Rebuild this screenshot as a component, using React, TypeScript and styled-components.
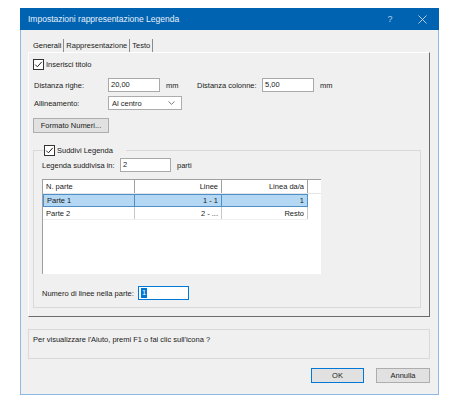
import React from "react";
import styled, { createGlobalStyle } from "styled-components";

const GlobalStyle = createGlobalStyle`
  body {
    margin: 0;
    background: #ffffff;
    font-family: "Liberation Sans", Arial, sans-serif;
  }
`;

const Page = styled.div`
  padding: 8px 0 0 20px;
`;

const Window = styled.div`
  width: 419px;
  height: 387px;
  box-sizing: border-box;
  border: 1px solid #8fb9e3;
  border-top: none;
  background: #f0f0f0;
  display: flex;
  flex-direction: column;
  font-size: 7.5px;
  color: #1a1a1a;
`;

const TitleBar = styled.div`
  height: 22px;
  margin: 0 -1px;
  background: #0063b1;
  color: #e8f0f8;
  display: flex;
  align-items: center;
  padding: 0 11px 0 8px;
  font-size: 8.5px;
`;

const Title = styled.span`
  flex: 1;
`;

const TitleButton = styled.span`
  width: 12px;
  display: flex;
  justify-content: center;
  margin-left: 20px;
  font-size: 9px;
  color: #b9cfe6;
`;

const Body = styled.div`
  flex: 1;
  display: flex;
  flex-direction: column;
  padding: 0 8px 0 7px;
`;

const TabStrip = styled.div`
  display: flex;
  margin-top: 8px;
  height: 14px;
  padding-left: 5px;
`;

const Tab = styled.div<{ $active?: boolean }>`
  display: flex;
  align-items: center;
  padding: 0 2px 0 ${(p) => (p.$active ? 0 : 2)}px;
  border-right: 1px solid #8c8c8c;
  margin-top: 1px;
  color: ${(p) => (p.$active ? "#111" : "#222")};
`;

const Panel = styled.div`
  height: 265px;
  box-sizing: border-box;
  border-top: 1px solid #ffffff;
  border-left: 1px solid #ffffff;
  border-right: 1px solid #6b6b6b;
  border-bottom: 1px solid #6b6b6b;
  padding: 6px 8px 0 4px;
  display: flex;
  flex-direction: column;
`;

const Row = styled.div<{ $top?: number; $h?: number }>`
  display: flex;
  align-items: center;
  margin-top: ${(p) => p.$top ?? 0}px;
  height: ${(p) => p.$h ?? 14}px;
`;

const Label = styled.span<{ $w?: number; $ml?: number }>`
  width: ${(p) => (p.$w ? `${p.$w}px` : "auto")};
  margin-left: ${(p) => p.$ml ?? 0}px;
  flex-shrink: 0;
  white-space: nowrap;
`;

const CheckLabel = styled.label`
  display: flex;
  align-items: center;
  gap: 2px;
  white-space: nowrap;
`;

const Box = styled.span`
  width: 11px;
  height: 11px;
  box-sizing: border-box;
  border: 1px solid #333333;
  background: #ffffff;
  display: flex;
  align-items: center;
  justify-content: center;
`;

const TextField = styled.div<{ $w: number; $focus?: boolean }>`
  width: ${(p) => p.$w}px;
  height: 14px;
  box-sizing: border-box;
  border: 1px solid ${(p) => (p.$focus ? "#0078d7" : "#a9a9a9")};
  background: #ffffff;
  padding: 0 2px;
  display: flex;
  align-items: flex-start;
  padding-top: 1px;
  flex-shrink: 0;
`;

const Selected = styled.span`
  background: #0078d7;
  color: #ffffff;
  padding: 0 1px;
  line-height: 10px;
`;

const Select = styled.div`
  width: 74px;
  height: 14px;
  box-sizing: border-box;
  border: 1px solid #acacac;
  background: #ffffff;
  display: flex;
  align-items: center;
  justify-content: space-between;
  padding: 0 6px 0 3px;
  flex-shrink: 0;
`;

const Button = styled.div<{ $w: number; $default?: boolean }>`
  width: ${(p) => p.$w}px;
  height: 15px;
  box-sizing: border-box;
  border: 1px solid ${(p) => (p.$default ? "#0078d7" : "#adadad")};
  background: #e1e1e1;
  display: flex;
  align-items: center;
  justify-content: center;
  flex-shrink: 0;
`;

const Group = styled.fieldset`
  margin: 12px 0 0 0;
  padding: 2px 8px 7px 8px;
  border: 1px solid #d9d9d9;
  min-width: 0;
`;

const Legend = styled.legend`
  padding: 0 13px 0 0;
  margin-left: 2px;
  height: 11px;
`;

const Table = styled.div`
  margin-top: 7px;
  width: 279px;
  height: 95px;
  box-sizing: border-box;
  background: #ffffff;
  border-top: 1px solid #a0a0a0;
  border-left: 1px solid #a0a0a0;
`;

const TableRow = styled.div<{ $h: number; $selected?: boolean; $header?: boolean }>`
  display: flex;
  height: ${(p) => p.$h}px;
  box-sizing: border-box;
  width: ${(p) => (p.$header ? "100%" : "265px")};
  background: ${(p) => (p.$selected ? "#b4d7f3" : "#ffffff")};
  border: ${(p) => (p.$selected ? "1px solid #4f8fc9" : "none")};
  border-bottom: ${(p) =>
    p.$selected ? "1px solid #4f8fc9" : p.$header ? "1px solid #e5e5e5" : "1px solid #f0f0f0"};
`;

const Cell = styled.div<{ $w: number; $right?: boolean; $last?: boolean; $line?: string }>`
  width: ${(p) => p.$w}px;
  box-sizing: border-box;
  flex-shrink: 0;
  display: flex;
  align-items: center;
  justify-content: ${(p) => (p.$right ? "flex-end" : "flex-start")};
  padding: 0 3px;
  border-right: ${(p) => (p.$last ? "none" : `1px solid ${p.$line ?? "#a0a0a0"}`)};
`;

const HelpBox = styled.div`
  margin-top: 12px;
  height: 30px;
  box-sizing: border-box;
  border: 1px solid #d9d9d9;
  padding: 5px 4px 0 4px;
`;

const ButtonRow = styled.div`
  margin-top: 9px;
  display: flex;
  justify-content: flex-end;
  gap: 12px;
`;

const Check = () => (
  <Box>
    <svg width="9" height="9" viewBox="0 0 9 9">
      <polyline points="1.2,4.6 3.4,6.8 7.8,1.8" fill="none" stroke="#222" strokeWidth="1" />
    </svg>
  </Box>
);

const Chevron = () => (
  <svg width="7" height="4" viewBox="0 0 7 4">
    <polyline points="0.5,0.5 3.5,3.3 6.5,0.5" fill="none" stroke="#555" strokeWidth="0.8" />
  </svg>
);

const Close = () => (
  <svg width="9" height="9" viewBox="0 0 9 9">
    <path d="M0.5 0.5 L8.5 8.5 M8.5 0.5 L0.5 8.5" stroke="#c9d9ec" strokeWidth="0.9" />
  </svg>
);

const parts = [
  { name: "Parte 1", lines: "1 - 1", range: "1", selected: true },
  { name: "Parte 2", lines: "2 - ...", range: "Resto", selected: false },
];

export default function App() {
  return (
    <>
      <GlobalStyle />
      <Page>
        <Window>
          <TitleBar>
            <Title>Impostazioni rappresentazione Legenda</Title>
            <TitleButton>?</TitleButton>
            <TitleButton>
              <Close />
            </TitleButton>
          </TitleBar>
          <Body>
            <TabStrip>
              <Tab $active>Generali</Tab>
              <Tab>Rappresentazione</Tab>
              <Tab>Testo</Tab>
            </TabStrip>
            <Panel>
              <Row $h={11}>
                <CheckLabel>
                  <Check />
                  Inserisci titolo
                </CheckLabel>
              </Row>
              <Row $top={8}>
                <Label $w={74} $ml={1}>Distanza righe:</Label>
                <TextField $w={52}>20,00</TextField>
                <Label $w={31} $ml={6}>mm</Label>
                <Label $w={65}>Distanza colonne:</Label>
                <TextField $w={52}>5,00</TextField>
                <Label $ml={6}>mm</Label>
              </Row>
              <Row $top={4}>
                <Label $w={74} $ml={1}>Allineamento:</Label>
                <Select>
                  Al centro
                  <Chevron />
                </Select>
              </Row>
              <Row $top={8} $h={15}>
                <Button $w={76}>Formato Numeri...</Button>
              </Row>
              <Group>
                <Legend>
                  <CheckLabel>
                    <Check />
                    Suddivi Legenda
                  </CheckLabel>
                </Legend>
                <Row>
                  <Label $w={78}>Legenda suddivisa in:</Label>
                  <TextField $w={51}>2</TextField>
                  <Label $ml={6}>parti</Label>
                </Row>
                <Table>
                  <TableRow $h={14} $header>
                    <Cell $w={92}>N. parte</Cell>
                    <Cell $w={87} $right>Linee</Cell>
                    <Cell $w={86} $right>Linea da/a</Cell>
                  </TableRow>
                  {parts.map((p) => (
                    <TableRow key={p.name} $h={13} $selected={p.selected}>
                      <Cell $w={p.selected ? 91 : 92} $line={p.selected ? "#4f8fc9" : "#c8c8c8"}>
                        {p.name}
                      </Cell>
                      <Cell $w={87} $right $line={p.selected ? "#4f8fc9" : "#c8c8c8"}>
                        {p.lines}
                      </Cell>
                      <Cell $w={p.selected ? 85 : 86} $right $last={p.selected} $line="#c8c8c8">
                        {p.range}
                      </Cell>
                    </TableRow>
                  ))}
                </Table>
                <Row $top={12}>
                  <Label $w={96}>Numero di linee nella parte:</Label>
                  <TextField $w={51} $focus>
                    <Selected>1</Selected>
                  </TextField>
                </Row>
              </Group>
            </Panel>
            <HelpBox>Per visualizzare l'Aiuto, premi F1 o fai clic sull'icona ?</HelpBox>
            <ButtonRow>
              <Button $w={53} $default>OK</Button>
              <Button $w={54}>Annulla</Button>
            </ButtonRow>
          </Body>
        </Window>
      </Page>
    </>
  );
}
